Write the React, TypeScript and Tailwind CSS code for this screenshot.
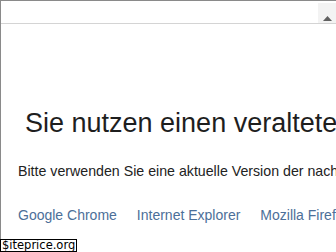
export default function App() {
  return (
    <div className="relative h-[252px] w-[336px] overflow-hidden bg-white font-['Liberation_Sans',Arial,sans-serif]">
      <div className="flex h-full flex-col border-l border-t border-[#8a8a8a]">
        {/* top bar */}
        <div className="flex h-[23px] shrink-0 border-b border-[#d4d4d4]">
          <div className="flex-1" />
          <div className="mt-[2px] flex w-[18px] flex-col items-center justify-end bg-[#f3f3f3] pb-[2px]">
            <svg width="9" height="5" viewBox="0 0 9 5">
              <path d="M0 5 L4.5 0 L9 5 Z" fill="#606060" />
            </svg>
          </div>
        </div>

        {/* content */}
        <div className="flex flex-col whitespace-nowrap">
          <h1 className="mt-[84px] pl-[24px] text-[27px] leading-[30px] text-[#1e1e1e]">
            Sie nutzen einen veralteten Browser
          </h1>
          <p className="mt-[24px] pl-[17px] text-[14.2px] leading-[18px] text-[#222]">
            Bitte verwenden Sie eine aktuelle Version der nachfolgenden Browser:
          </p>
          <div className="mt-[26px] flex gap-[20px] pl-[17px] text-[14px] leading-[18px] text-[#4c6f99]">
            <a>Google Chrome</a>
            <a>Internet Explorer</a>
            <a>Mozilla Firefox</a>
          </div>
        </div>
      </div>

      {/* watermark */}
      <div className="absolute bottom-0 left-0 h-[13px] border border-black bg-white px-[1px] font-['DejaVu_Sans',sans-serif] text-[11.5px] leading-[11px] text-black">
        $iteprice.org
      </div>
    </div>
  );
}
